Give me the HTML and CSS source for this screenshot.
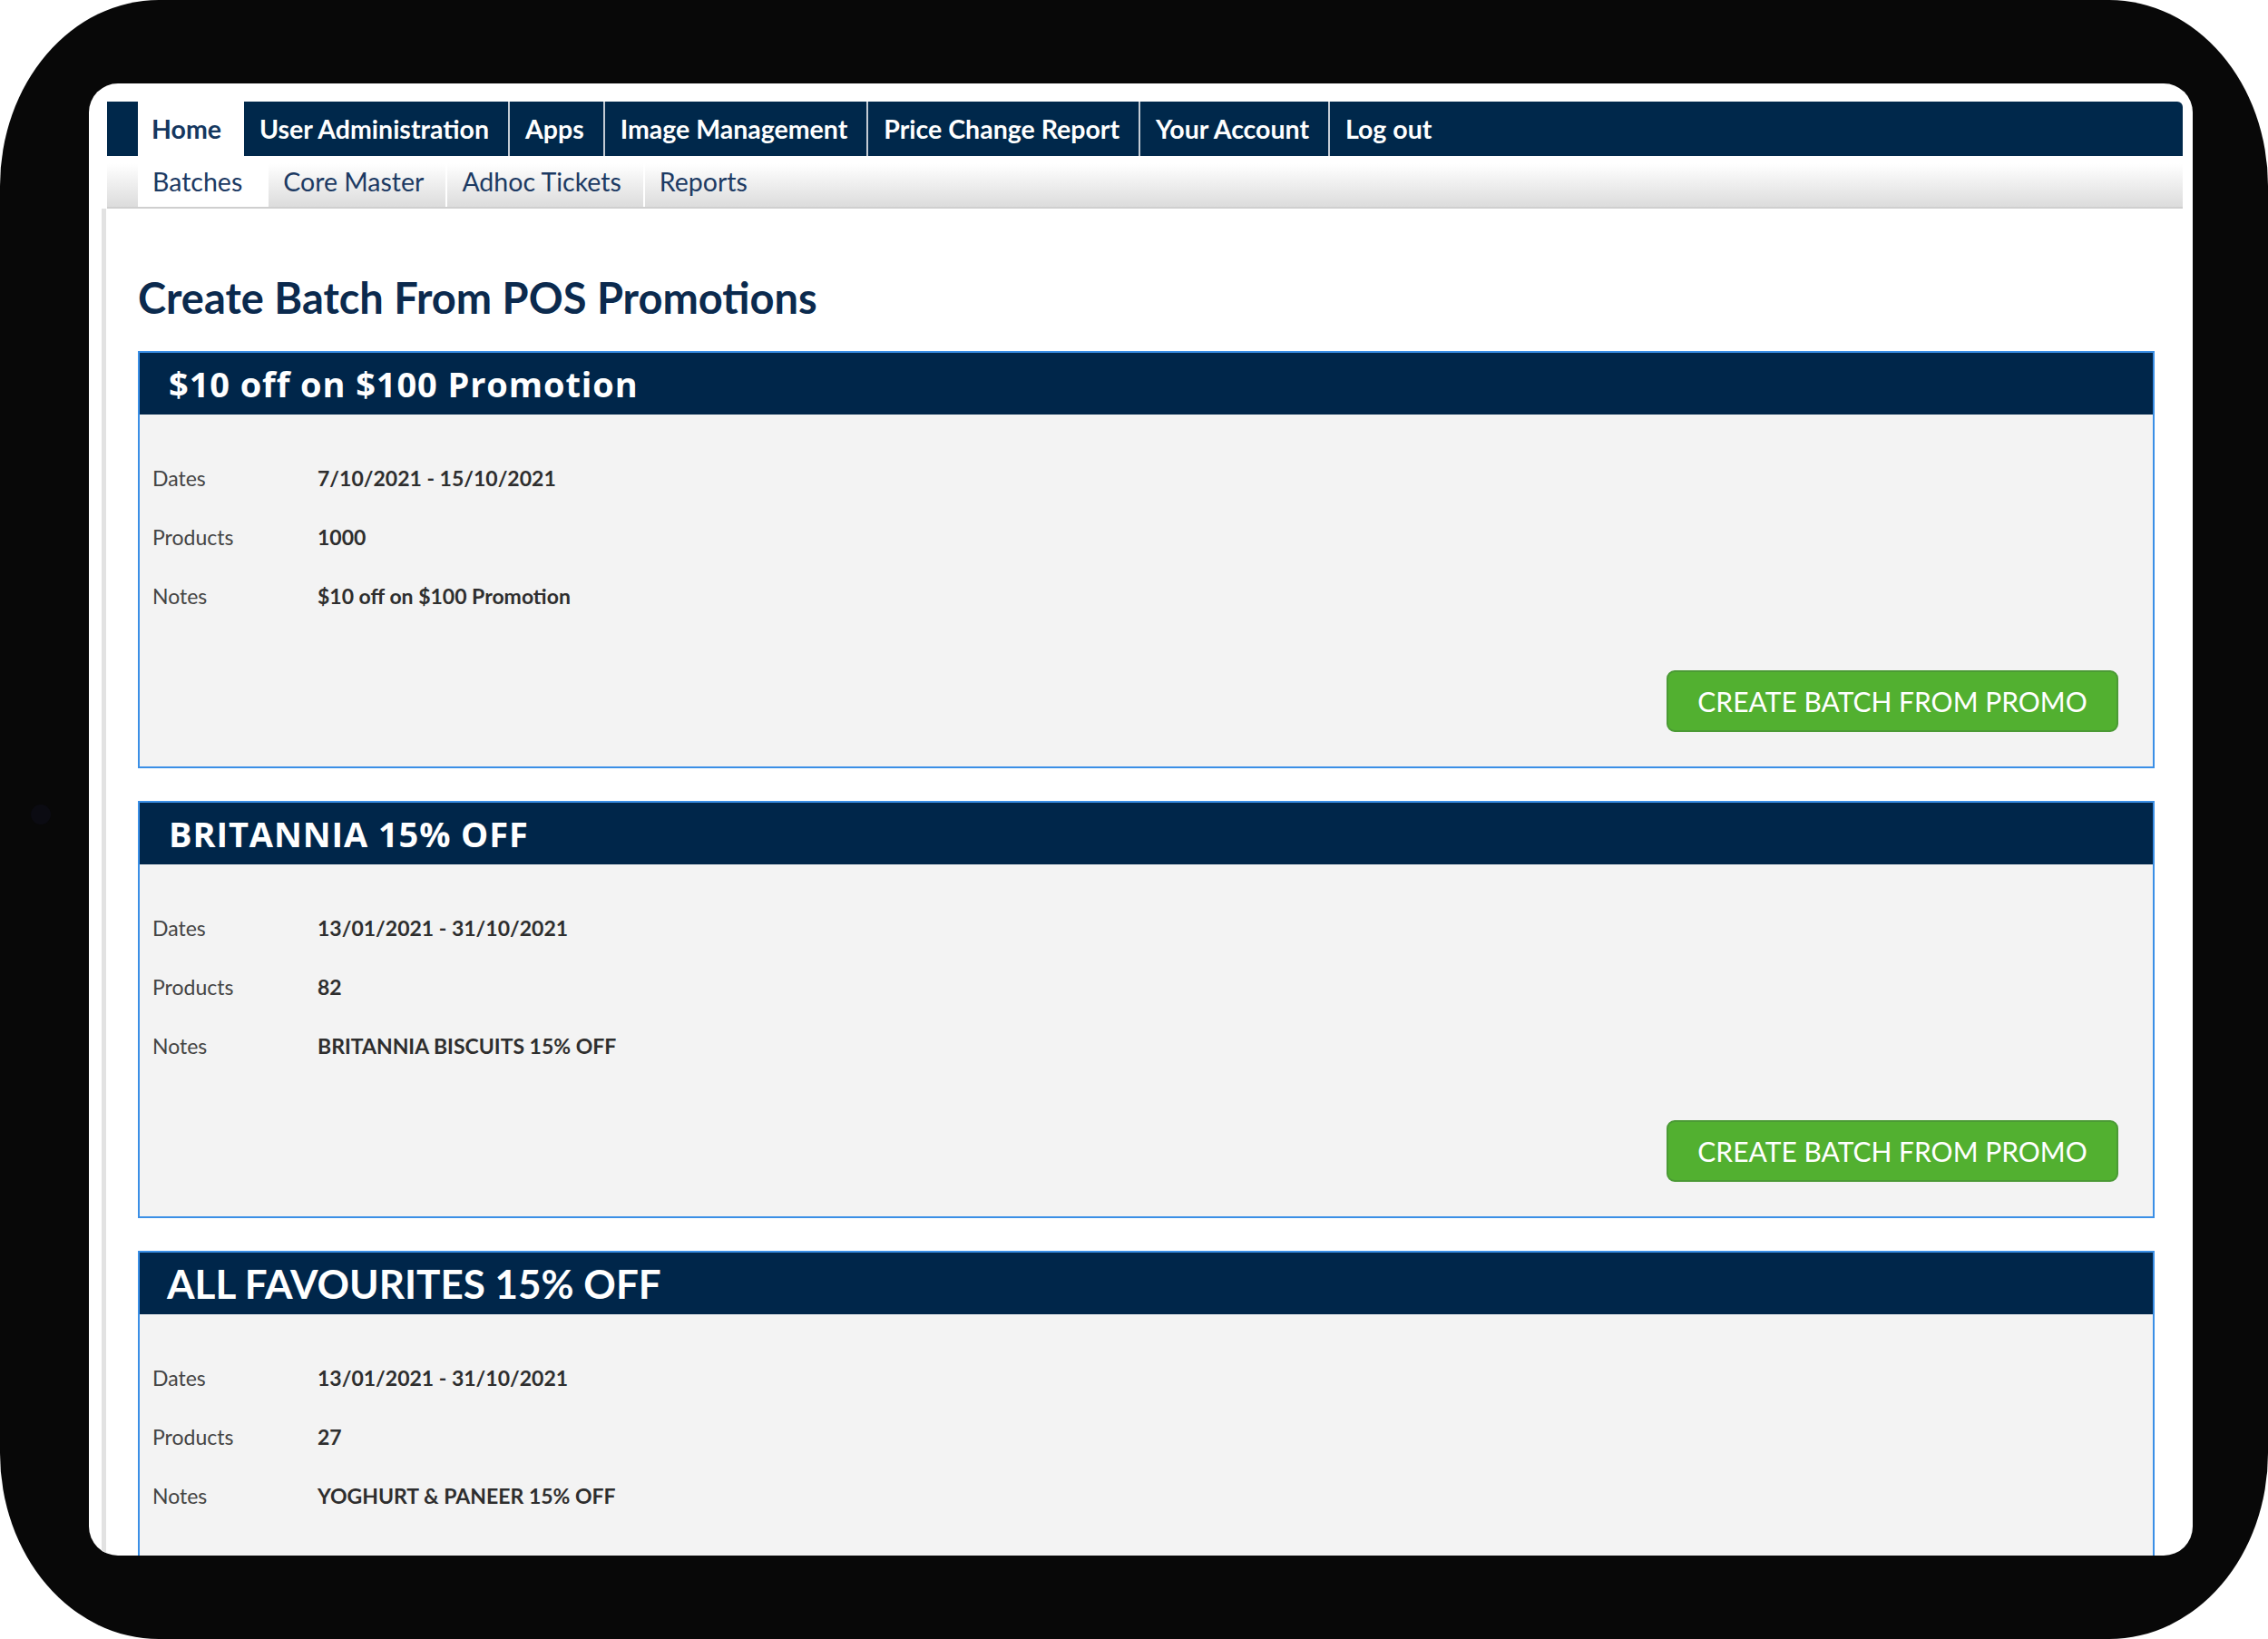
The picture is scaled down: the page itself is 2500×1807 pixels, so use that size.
FILE: index.html
```html
<!DOCTYPE html>
<html lang="en">
<head>
    <meta charset="UTF-8">
    <meta name="viewport" content="width=device-width, initial-scale=1.0">
    <title>Create Batch From POS Promotions</title>
    <link rel="stylesheet" href="styles.css">
</head>
<body>

    <div class="device">
        <span class="camera"></span>

        <div class="screen">
            <nav class="topnav">
                <a class="nav-tab active" href="#">Home</a>
                <a class="nav-tab" href="#">User Administration</a>
                <a class="nav-tab" href="#">Apps</a>
                <a class="nav-tab" href="#">Image Management</a>
                <a class="nav-tab" href="#">Price Change Report</a>
                <a class="nav-tab" href="#">Your Account</a>
                <a class="nav-tab" href="#">Log out</a>
            </nav>

            <nav class="subnav">
                <a class="sub-tab active" href="#">Batches</a>
                <a class="sub-tab" href="#">Core Master</a>
                <a class="sub-tab" href="#">Adhoc Tickets</a>
                <a class="sub-tab" href="#">Reports</a>
            </nav>

            <div class="content">
                <h1>Create Batch From POS Promotions</h1>

                <div class="promo">
                    <h2 class="promo-head">$10 off on $100 Promotion</h2>
                    <div class="promo-body">
                        <div class="detail-row"><span class="detail-label">Dates</span><span class="detail-value">7/10/2021 - 15/10/2021</span></div>
                        <div class="detail-row"><span class="detail-label">Products</span><span class="detail-value">1000</span></div>
                        <div class="detail-row"><span class="detail-label">Notes</span><span class="detail-value">$10 off on $100 Promotion</span></div>
                        <div class="promo-actions">
                            <button class="btn-promo">Create Batch From Promo</button>
                        </div>
                    </div>
                </div>

                <div class="promo">
                    <h2 class="promo-head">BRITANNIA 15% OFF</h2>
                    <div class="promo-body">
                        <div class="detail-row"><span class="detail-label">Dates</span><span class="detail-value">13/01/2021 - 31/10/2021</span></div>
                        <div class="detail-row"><span class="detail-label">Products</span><span class="detail-value">82</span></div>
                        <div class="detail-row"><span class="detail-label">Notes</span><span class="detail-value">BRITANNIA BISCUITS 15% OFF</span></div>
                        <div class="promo-actions">
                            <button class="btn-promo">Create Batch From Promo</button>
                        </div>
                    </div>
                </div>

                <div class="promo">
                    <h2 class="promo-head promo-head-lg">ALL FAVOURITES 15% OFF</h2>
                    <div class="promo-body">
                        <div class="detail-row"><span class="detail-label">Dates</span><span class="detail-value">13/01/2021 - 31/10/2021</span></div>
                        <div class="detail-row"><span class="detail-label">Products</span><span class="detail-value">27</span></div>
                        <div class="detail-row"><span class="detail-label">Notes</span><span class="detail-value">YOGHURT &amp; PANEER 15% OFF</span></div>
                        <div class="promo-actions">
                            <button class="btn-promo">Create Batch From Promo</button>
                        </div>
                    </div>
                </div>
            </div>
        </div>
    </div>

</body>
</html>
```

FILE: styles.css
```css
* { margin: 0; padding: 0; box-sizing: border-box; font-family: 'Lato', 'Liberation Sans', sans-serif; }
body { background: #fff; width: 2500px; height: 1807px; overflow: hidden; }
a { text-decoration: none; }

/* tablet frame */
.device { position: relative; width: 2500px; height: 1807px; background: #080808; border-radius: 175px / 205px; padding: 92px 83px 92px 98px; }
.camera { position: absolute; left: 34px; top: 887px; width: 22px; height: 22px; border-radius: 50%; background: #0b0b12; }
.screen { display: flex; flex-direction: column; height: 100%; background: #fff; border-radius: 32px; overflow: hidden; padding: 20px 11px 0 14px; }

/* main menu */
.topnav { display: flex; flex-shrink: 0; height: 60px; margin-left: 6px; padding-left: 34px; background: #00284b; border-radius: 0 6px 0 0; }
.nav-tab { display: flex; align-items: center; padding: 0 21px 0 17px; color: #fff; font-size: 28.5px; font-weight: 700; border-left: 2px solid #c3cbd4; }
.nav-tab.active { background: #fff; color: #15375f; border-left: none; padding: 0 25px 0 15px; }
.nav-tab.active + .nav-tab { border-left: none; }

/* second level menu */
.subnav { display: flex; flex-shrink: 0; height: 58px; margin-left: 6px; padding-left: 34px; background: linear-gradient(#fff 15%, #dcdcdc); border-bottom: 2px solid #cfcfcf; }
.sub-tab { display: flex; align-items: center; padding: 0 24px 0 16px; color: #1c3a63; font-size: 28.5px; border-left: 2px solid #fff; }
.sub-tab.active { background: #fff; border-left: none; padding-right: 27px; }

.content { flex: 1; min-height: 0; border-left: 5px solid #e2e2e2; padding: 71px 31px 0 35px; }
h1 { color: #0b2a4e; font-size: 47px; line-height: 54px; font-weight: 700; margin-bottom: 32px; }

/* promotion cards */
.promo { border: 2px solid #3b8fe6; background: #f3f3f3; margin-bottom: 36px; }
.promo-head { height: 68px; line-height: 68px; padding-left: 32px; background: #00264a; color: #fff; font-family: 'Open Sans', sans-serif; font-size: 38px; font-weight: 700; letter-spacing: 0.9px; }
.promo-head-lg { padding-left: 30px; font-family: 'Lato', sans-serif; font-size: 44px; letter-spacing: 0; }
.promo-body { padding: 37px 38px 38px 14px; }
.detail-row { display: flex; align-items: center; height: 65px; font-size: 23px; }
.detail-label { width: 182px; color: #444; }
.detail-value { color: #2e2e2e; font-weight: 700; }
.promo-actions { display: flex; justify-content: flex-end; margin-top: 50px; }
.btn-promo { width: 498px; height: 68px; background: #52b030; border: 2px solid #4b9a35; border-radius: 9px; color: #fff; font-size: 30px; text-transform: uppercase; cursor: pointer; }
.btn-promo:hover { background: #47a028; }
```
